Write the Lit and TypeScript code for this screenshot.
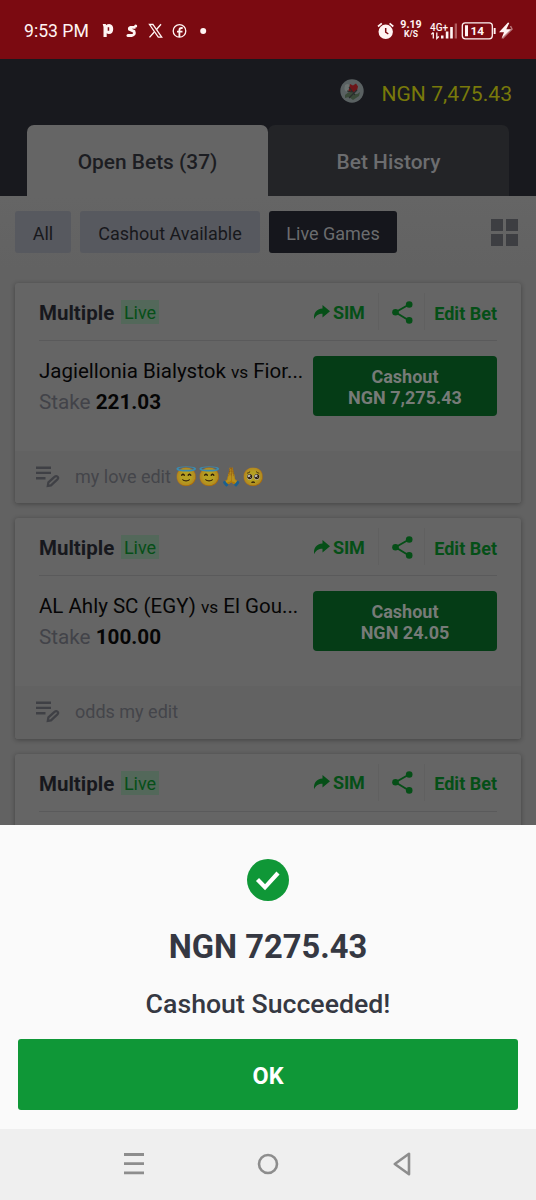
import { LitElement, html, css, nothing } from "lit";
import { customElement, property } from "lit/decorators.js";

interface Bet {
  home?: string;
  away?: string;
  stake?: string;
  cashout?: string;
  note?: string;
  emojis?: string[];
}

const BETS: Bet[] = [
  { home: "Jagiellonia Bialystok", away: "Fior...", stake: "221.03", cashout: "7,275.43", note: "my love edit", emojis: ["😇", "😇", "🙏", "🥺"] },
  { home: "AL Ahly SC (EGY)", away: "El Gou...", stake: "100.00", cashout: "24.05", note: "odds my edit" },
  {},
];

@customElement("bet-card")
class BetCard extends LitElement {
  @property({ attribute: false }) bet!: Bet;

  static styles = css`
    :host { display: flex; flex-direction: column; height: 220.3px; flex: none; background: #656565; border-radius: 3px; box-shadow: 0 1px 5px rgba(0, 0, 0, 0.32); overflow: hidden; }
    .head { display: flex; align-items: center; height: 57px; margin: 0 24px; border-bottom: 1px solid #5a5a5b; box-sizing: content-box; }
    .kind { font-size: 20.5px; line-height: 24px; font-weight: 700; color: #17181d; padding-top: 3px; width: 82px; }
    .live { font-size: 18px; line-height: 25px; height: 24px; width: 38px; text-align: center; background: #53685a; color: #064f18; margin-top: 1px; }
    .sim { margin-left: auto; display: flex; align-items: center; height: 36px; color: #054f17; font-size: 18px; font-weight: 700; gap: 3px; width: 65px; border-right: 1px solid #606060; padding-top: 1px; }
    .sim span { letter-spacing: -0.2px; }
    .share { width: 45px; height: 36px; display: flex; align-items: center; justify-content: center; border-right: 1px solid #606060; padding-top: 1px; }
    .share svg { margin-left: 1px; }
    .edit { width: 72px; text-align: right; white-space: nowrap; font-size: 18px; font-weight: 700; color: #054f17; padding-top: 3px; }
    .body { display: flex; justify-content: space-between; height: 110px; padding: 15px 24px 0; box-sizing: border-box; }
    .info { width: 268px; }
    .teams { font-size: 20.5px; line-height: 31px; color: #050506; white-space: nowrap; }
    .vs { font-size: 17.3px; }
    .stake { font-size: 20.7px; line-height: 30px; color: #424349; margin-top: -1px; }
    .stake b { color: #050505; font-weight: 700; }
    .cash { width: 184px; height: 60px; border-radius: 4px; background: #053c16; color: #777b78; font-size: 18px; line-height: 21px; font-weight: 700; display: flex; flex-direction: column; align-items: center; justify-content: center; padding-top: 2px; box-sizing: border-box; }
    .foot { flex: 1; background: #626262; display: flex; align-items: center; padding: 0 0 2px 21px; }
    .foot svg { margin-top: 1px; }
    .note { margin-left: 15px; font-size: 18px; color: #44454a; display: flex; align-items: center; gap: 5px; }
    .emo { display: flex; filter: brightness(0.72); font-size: 18px; font-family: "Noto Color Emoji", sans-serif; }
    .emo span { width: 22.3px; }
    svg { display: block; }
  `;

  render() {
    const b = this.bet;
    return html`
      <div class="head">
        <div class="kind">Multiple</div>
        <div class="live">Live</div>
        <div class="sim">
          <svg width="17" height="15" viewBox="0 0 17 15"><path d="M9.500 0 17 6.300 9.500 12.600V8.800C5.500 8.800 3 10.300 1.100 14.300 0.300 8 3.500 4 9.500 3.600Z" fill="#054f17" /></svg>
          <span>SIM</span>
        </div>
        <div class="share">
          <svg width="21" height="23" viewBox="0 0 21 23" fill="#054f17"><path d="M17 3.500 3.500 11.300 17 19.500" fill="none" stroke="#054f17" stroke-width="1.900" /><circle cx="17.200" cy="3.500" r="3.300" /><circle cx="3.500" cy="11.300" r="3.300" /><circle cx="17.200" cy="19.400" r="3.300" /></svg>
        </div>
        <div class="edit">Edit Bet</div>
      </div>
      ${b.home
        ? html`
            <div class="body">
              <div class="info">
                <div class="teams">${b.home} <span class="vs">vs</span> ${b.away}</div>
                <div class="stake">Stake <b>${b.stake}</b></div>
              </div>
              <div class="cash"><span>Cashout</span><span>NGN ${b.cashout}</span></div>
            </div>
            <div class="foot">
              <svg width="24" height="22" viewBox="0 0 24 22"><g stroke="#3f4045" stroke-width="2.400" fill="none"><path d="M0 1.700H15M0 6.900H15M0 12.200H9.500" /><path d="M11.800 20 12.400 16.400 18.800 10.600Q20.200 9.400 21.600 10.700 22.800 12 21.400 13.400L15 19.400Z" stroke-width="2.200" /></g></svg>
              <div class="note"><span>${b.note}</span>${b.emojis ? html`<span class="emo">${b.emojis.map((e) => html`<span>${e}</span>`)}</span>` : nothing}</div>
            </div>
          `
        : nothing}
    `;
  }
}

@customElement("app-root")
class AppRoot extends LitElement {
  static styles = css`
    :host { display: block; font-family: Roboto, sans-serif; }
    .screen { width: 536px; height: 1200px; display: flex; flex-direction: column; overflow: hidden; background: #626262; }
    svg { display: block; }
    .status { height: 59px; flex: none; background: #7b0a11; color: #fff4f3; display: flex; align-items: center; padding: 2px 23px 0 24px; box-sizing: border-box; }
    .time { font-size: 17.6px; width: 78px; white-space: nowrap; }
    .right { margin-left: auto; display: flex; align-items: center; }
    .speed { width: 22px; margin: 0 7px 3px 6px; display: flex; flex-direction: column; align-items: center; font-weight: 700; font-size: 10.7px; line-height: 10px; }
    .speed small { font-size: 8.6px; line-height: 9px; }
    .top { height: 137px; flex: none; background: #18191e; display: flex; flex-direction: column; justify-content: space-between; }
    .wallet { height: 66px; display: flex; align-items: center; justify-content: flex-end; gap: 17px; padding-right: 24px; color: #78790a; font-size: 21.1px; }
    .wallet span { padding-top: 3px; }
    .wallet svg { margin-bottom: 2px; }
    .tabs { display: flex; margin: 0 27px; height: 71px; font-size: 20.9px; font-weight: 500; line-height: 74px; text-align: center; }
    .tab { flex: 1; border-radius: 7px 7px 0 0; background: #232427; color: #6c6d6f; }
    .on { background: #656565; color: #1c1d22; }
    .filters { display: flex; align-items: center; gap: 9px; height: 72px; flex: none; padding: 0 18px 0 15px; background: linear-gradient(#656565, #626262); }
    .chip { height: 42px; line-height: 45px; border-radius: 3px; background: #57595f; color: #17181c; font-size: 18px; text-align: center; }
    .all { width: 56px; }
    .avail { width: 180px; }
    .games { width: 128px; background: #15161c; color: #6b6c6e; }
    .grid { margin-left: auto; }
    .list { flex: 1; min-height: 0; overflow: hidden; padding: 15px 15px 0; display: flex; flex-direction: column; gap: 15px; }
    .sheet { height: 304px; flex: none; background: #fafafa; color: #353842; display: flex; flex-direction: column; align-items: center; padding: 34px 18px 0; box-sizing: border-box; }
    .sum { font-size: 32.7px; line-height: 40px; font-weight: 700; margin-top: 26px; }
    .msg { font-size: 26.7px; line-height: 32px; font-weight: 500; margin-top: 21px; }
    .ok { align-self: stretch; height: 71px; line-height: 74px; margin-top: 19px; border-radius: 3px; background: #0f9737; color: #fff; text-align: center; font-size: 23.4px; font-weight: 700; }
    .nav { height: 71px; flex: none; background: #efefef; display: grid; grid-template-columns: 1fr 1fr 1fr; align-items: center; justify-items: center; padding: 0 67px 2px; box-sizing: border-box; }
  `;

  render() {
    return html`
      <div class="screen">
        <div class="status">
          <div class="time">9:53 PM</div>
          <svg width="108" height="20" viewBox="102 20 108 20" fill="#fff4f3">
            <path fill-rule="evenodd" d="M102.7 23h3.200v1.200q1.400-1.200 3.300-1.200 4 .3 4 5 0 4.900-4.300 5.100-1.600 0-2.200-.8V36H103.500V26Zm5 3.200v3.500h1.500v-3.500Z" />
            <path d="M135.500 26.300H130.600Q129 26.500 129.400 28.200L134 30.400Q135.500 33.800 131.600 34.500H128" fill="none" stroke="#fff4f3" stroke-width="2.800" />
            <circle cx="128" cy="34.400" r="1.500" /><circle cx="135.700" cy="25" r="1.500" />
            <path d="M149.500 23.500h3.400l8.800 12.700h-3.400Z" fill="none" stroke="#fff4f3" stroke-width="1.300" />
            <path d="M161 23.300 156.300 28.700M154.300 31 149.500 36.400" stroke="#fff4f3" stroke-width="1.400" />
            <circle cx="179.500" cy="29.900" r="6.300" fill="none" stroke="#fff4f3" stroke-width="1.300" />
            <path d="M179.400 36V29.200Q179.400 27 181.600 27H182.700M177 30.700H182.500" fill="none" stroke="#fff4f3" stroke-width="1.800" />
            <circle cx="203.200" cy="30" r="3" />
          </svg>
          <div class="right">
            <svg width="17" height="18" viewBox="378 21 17 18"><circle cx="386.700" cy="30.800" r="7.200" fill="#fff4f3" /><path d="M379 25.500 382.800 22.300M394.300 25.500 390.600 22.300" stroke="#fff4f3" stroke-width="1.700" /><path d="M386.700 27V31.200L389.300 33" fill="none" stroke="#7b0a11" stroke-width="1.500" /></svg>
            <div class="speed"><span>9.19</span><small>K/S</small></div>
            <svg width="84" height="20" viewBox="429 20 84 20" fill="#fff4f3">
              <text x="430" y="29.500" font-family="Roboto" font-size="10" font-weight="500">4G+</text>
              <path d="M433.300 31.500v6M431.300 33.400l2-2M436.800 31.500v6l2-2" fill="none" stroke="#fff4f3" stroke-width="1.300" />
              <path d="M441 34.500h2.500v3H441ZM445.800 30.500h2.600v7h-2.600ZM450.200 26h2.600v11.500h-2.600Z" />
              <path d="M454.700 22.500h2.300v15h-2.300Z" fill="#ae5a5d" />
              <rect x="462.300" y="21.800" width="30" height="16" rx="3" fill="none" stroke="#fff4f3" stroke-width="1.300" />
              <path d="M465 24.300h3v11h-3ZM493.700 27h1.900v6h-1.900Z" />
              <text x="470.500" y="34" font-family="Roboto" font-size="11.800" font-weight="700">14</text>
              <path d="M510.500 25 512 28 502.500 37.500" fill="none" stroke="#b7777a" stroke-width="1.500" /><path d="M508 21.500 499 31.300H504L501.500 37.500 511 28.300H506.300L509.300 22Z" />
            </svg>
          </div>
        </div>
        <div class="top">
          <div class="wallet">
            <svg width="24" height="24" viewBox="0 0 24 24"><circle cx="12" cy="12" r="11.700" fill="#5a6162" /><path d="M5 6Q9 3 11 8L8 13Q3 13 5 6Z" fill="#6c7371" /><path d="M10 5l3 1.500 3-2 2 3-1 4-4 2-3-1-2 1 1-4Z" fill="#6d1519" /><path d="M5 16q5-5 8-2t7-1l-1 4-6 4-4-3-4 1Z" fill="#3a4a39" /><path d="M9 8l6 8M17 11l-8 8M7 12l5 1" stroke="#292d2c" stroke-width="1.200" /></svg>
            <span>NGN 7,475.43</span>
          </div>
          <div class="tabs"><div class="tab on">Open Bets (37)</div><div class="tab">Bet History</div></div>
        </div>
        <div class="filters">
          <div class="chip all">All</div>
          <div class="chip avail">Cashout Available</div>
          <div class="chip games">Live Games</div>
          <svg class="grid" width="27" height="27" viewBox="0 0 27 27"><path d="M0 0h12v12H0ZM15 0h12v12H15ZM0 15h12v12H0ZM15 15h12v12H15Z" fill="#3d3e42" /></svg>
        </div>
        <div class="list">${BETS.map((b) => html`<bet-card .bet=${b}></bet-card>`)}</div>
        <div class="sheet">
          <svg width="42" height="42" viewBox="0 0 42 42"><circle cx="21" cy="21" r="21" fill="#0f9737" /><path d="M10.500 20.500 18 28.300 31 14" fill="none" stroke="#fff" stroke-width="4.200" /></svg>
          <div class="sum">NGN 7275.43</div>
          <div class="msg">Cashout Succeeded!</div>
          <div class="ok">OK</div>
        </div>
        <div class="nav">
          <svg width="20" height="22" viewBox="0 0 20 22"><path d="M0 1.500H20M0 10.700H20M0 19.800H20" stroke="#8d8d8d" stroke-width="2.800" /></svg>
          <svg width="22" height="22" viewBox="0 0 22 22"><circle cx="11" cy="11" r="9" fill="none" stroke="#8d8d8d" stroke-width="2.600" /></svg>
          <svg width="18" height="24" viewBox="0 0 18 24"><path d="M1.800 12 16 1.800V22.200Z" fill="none" stroke="#8d8d8d" stroke-width="2.600" stroke-linejoin="round" /></svg>
        </div>
      </div>
    `;
  }
}
